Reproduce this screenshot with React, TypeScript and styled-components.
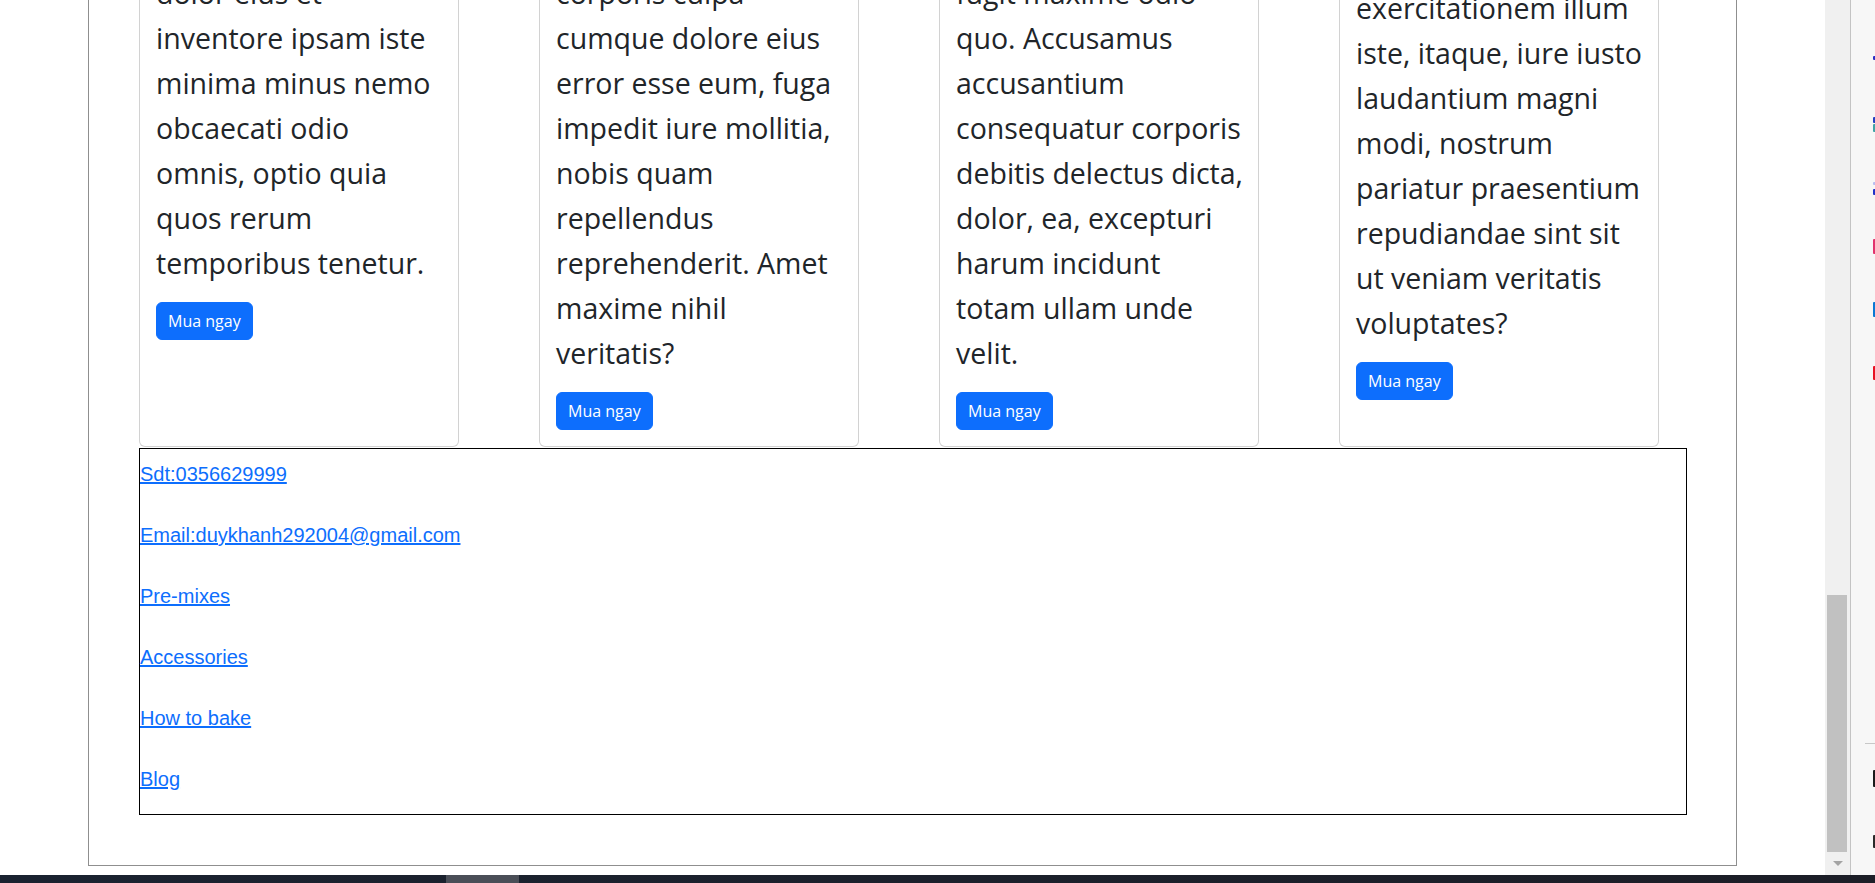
import styled, { createGlobalStyle } from "styled-components";

const cards = [
    {
        media: 180,
        lines: [
            "dolor eius et",
            "inventore ipsam iste",
            "minima minus nemo",
            "obcaecati odio",
            "omnis, optio quia",
            "quos rerum",
            "temporibus tenetur.",
        ],
    },
    {
        media: 180,
        lines: [
            "corporis culpa",
            "cumque dolore eius",
            "error esse eum, fuga",
            "impedit iure mollitia,",
            "nobis quam",
            "repellendus",
            "reprehenderit. Amet",
            "maxime nihil",
            "veritatis?",
        ],
    },
    {
        media: 180,
        lines: [
            "fugit maxime odio",
            "quo. Accusamus",
            "accusantium",
            "consequatur corporis",
            "debitis delectus dicta,",
            "dolor, ea, excepturi",
            "harum incidunt",
            "totam ullam unde",
            "velit.",
        ],
    },
    {
        media: 195,
        lines: [
            "exercitationem illum",
            "iste, itaque, iure iusto",
            "laudantium magni",
            "modi, nostrum",
            "pariatur praesentium",
            "repudiandae sint sit",
            "ut veniam veritatis",
            "voluptates?",
        ],
    },
];

const links = [
    "Sdt:0356629999",
    "Email:duykhanh292004@gmail.com",
    "Pre-mixes",
    "Accessories",
    "How to bake",
    "Blog",
];

const sideMarks = [
    { top: 56, h: 4, color: "#2b2fc4" },
    { top: 57, h: 6, color: "#2440c2" },
    { top: 1, h: 8, color: "#3fa3a6" },
    { top: 50, h: 3, color: "#b9bdf0" },
    { top: 4, h: 6, color: "#2233c8" },
    { top: 44, h: 15, color: "#e2336d" },
    { top: 48, h: 15, color: "#0a78d4" },
    { top: 49, h: 14, color: "#e81123" },
];

export default function App() {
    return (
        <Window>
            <GlobalStyle />
            <Screen>
                <Viewport>
                    <Frame>
                        <CardRow>
                            {cards.map((card, i) => (
                                <Card key={i}>
                                    <CardMedia $h={card.media} />
                                    <CardBody>
                                        <CardText>{card.lines.join("\n")}</CardText>
                                        <BuyButton>Mua ngay</BuyButton>
                                    </CardBody>
                                </Card>
                            ))}
                        </CardRow>
                        <Footer>
                            {links.map((l) => (
                                <FooterLink key={l} href="#">{l}</FooterLink>
                            ))}
                        </Footer>
                    </Frame>
                </Viewport>
                <Scrollbar>
                    <ScrollThumb />
                    <ScrollArrow />
                </Scrollbar>
                <SidePanel>
                    <SideTop>
                        {sideMarks.map((m, i) => (
                            <SideMark key={i} $top={m.top} $h={m.h} $color={m.color} />
                        ))}
                    </SideTop>
                    <SideRule />
                    <SideMark $top={26} $h={17} $color="#1a1a1a" />
                    <SideMark $top={48} $h={13} $color="#2a2a2a" />
                </SidePanel>
            </Screen>
            <Taskbar>
                <TaskItem />
            </Taskbar>
        </Window>
    );
}

const GlobalStyle = createGlobalStyle`
html, body {
    margin: 0;
    padding: 0;
    overflow: hidden;
    background: #fff;
}
* {
    box-sizing: border-box;
}
`

const Window = styled.div`
display: flex;
flex-direction: column;
width: 1875px;
height: 883px;
`
const Screen = styled.div`
display: flex;
height: 875px;
`
const Viewport = styled.main`
display: flex;
flex-direction: column;
justify-content: flex-end;
width: 1825px;
height: 100%;
overflow: hidden;
background: #fff;
`
const Frame = styled.div`
align-self: center;
flex-shrink: 0;
width: 1649px;
margin-bottom: 9px;
padding: 0 50px 50px;
border: 1px solid #8f8f8f;
`
const CardRow = styled.div`
display: flex;
align-items: stretch;
gap: 80px;
margin-bottom: 1px;
`
const Card = styled.div`
display: flex;
flex-direction: column;
width: 320px;
border: 1px solid rgba(0, 0, 0, 0.175);
border-radius: 6px;
background: #fff;
`
const CardMedia = styled.div<{ $h: number }>`
height: ${(p) => p.$h}px;
`
const CardBody = styled.div`
display: flex;
flex-direction: column;
align-items: flex-start;
padding: 16px;
`
const CardText = styled.p`
margin: 0 0 16px;
padding-top: 1px;
font-family: "Open Sans", "Noto Sans", sans-serif;
font-size: 28.5px;
line-height: 45px;
color: #212529;
white-space: pre;
`
const BuyButton = styled.button`
height: 38px;
padding: 0 11px;
font-family: "Open Sans", "Noto Sans", sans-serif;
font-size: 16px;
line-height: 24px;
color: #fff;
background: #0d6efd;
border: 1px solid #0d6efd;
border-radius: 6px;
cursor: pointer;
`
const Footer = styled.footer`
display: flex;
flex-direction: column;
align-items: flex-start;
gap: 38px;
width: 1548px;
padding: 14px 0 23px;
border: 1px solid #000;
`
const FooterLink = styled.a`
font-family: "Liberation Sans", Arial, sans-serif;
font-size: 20px;
line-height: 23px;
color: #0d6efd;
text-decoration: underline;
`
const Scrollbar = styled.div`
display: flex;
flex-direction: column;
justify-content: flex-end;
width: 26px;
background: #f0f0f0;
border-right: 1px solid #c4c4c4;
`
const ScrollThumb = styled.div`
height: 257px;
margin: 0 3px 0 2px;
background: #c1c1c1;
`
const ScrollArrow = styled.div`
display: flex;
justify-content: center;
height: 23px;
padding-top: 9px;
&::after {
    content: "";
    border-left: 5px solid transparent;
    border-right: 5px solid transparent;
    border-top: 5px solid #a3a3a3;
    height: 0;
    width: 0;
}
`
const SidePanel = styled.aside`
display: flex;
flex-direction: column;
align-items: flex-end;
width: 24px;
background: #f7f7f7;
`
const SideTop = styled.div`
display: flex;
flex-direction: column;
align-items: flex-end;
height: 743px;
`
const SideMark = styled.span<{ $top: number; $h: number; $color: string }>`
display: block;
width: 2px;
height: ${(p) => p.$h}px;
margin-top: ${(p) => p.$top}px;
background: ${(p) => p.$color};
border-radius: 1px 0 0 1px;
`
const SideRule = styled.div`
width: 10px;
height: 1px;
background: #c8c8c8;
`
const Taskbar = styled.div`
display: flex;
height: 8px;
background: linear-gradient(90deg, #1a2230, #1c1e27);
`
const TaskItem = styled.div`
width: 73px;
margin-left: 446px;
background: #4a4e57;
`
